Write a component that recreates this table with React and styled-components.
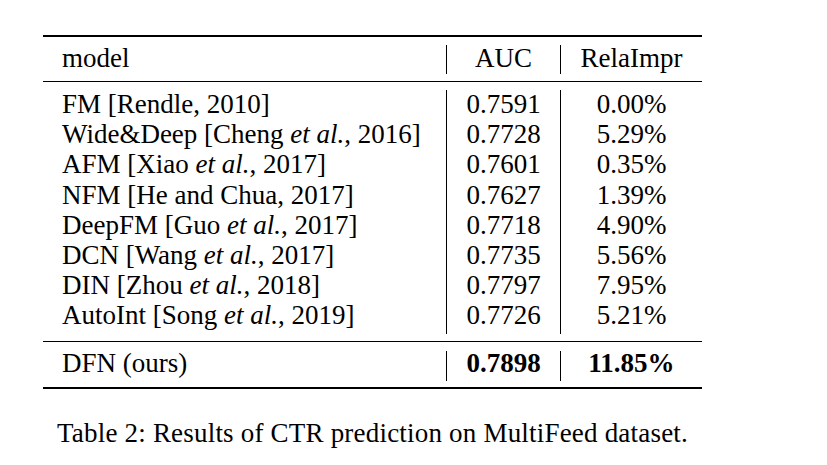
import React from 'react';
import styled, { createGlobalStyle } from 'styled-components';

// --- GLOBAL ---

const GlobalStyle = createGlobalStyle`
  html, body {
    margin: 0;
    padding: 0;
    background: #ffffff;
  }
  body {
    font-family: "Liberation Serif", "Times New Roman", serif;
    color: #000000;
  }
`;

// --- STYLED COMPONENTS ---

const Page = styled.div`
  padding: 35px 0 0 43px;
`;

const Figure = styled.figure`
  margin: 0;
  width: 659px;
  display: flex;
  flex-direction: column;
  align-items: center;
`;

const Table = styled.div`
  width: 100%;
  border-top: 2px solid #000;
  border-bottom: 2px solid #000;
  font-size: 27px;
`;

const Section = styled.div`
  display: flex;
  align-items: stretch;
  border-top: ${(p) => (p.$ruled ? '1px solid #000' : 'none')};
`;

const Column = styled.div`
  width: ${(p) => p.$width}px;
  flex: 0 0 auto;
  box-sizing: border-box;
  padding: ${(p) => p.$pad};
  padding-left: ${(p) => (p.$left ? '19px' : '0')};
  text-align: ${(p) => (p.$left ? 'left' : 'center')};
`;

const Line = styled.div`
  line-height: ${(p) => p.$lh || 30}px;
  height: ${(p) => p.$lh || 30}px;
  white-space: nowrap;
  font-weight: ${(p) => (p.$bold ? 700 : 400)};
`;

const Sep = styled.div`
  width: 1px;
  flex: 0 0 1px;
  background: #000;
  margin: ${(p) => p.$inset};
`;

const Em = styled.i`
  font-style: italic;
`;

const Caption = styled.figcaption`
  margin-top: 29px;
  font-size: 27px;
  line-height: 30px;
  letter-spacing: 0.2px;
  white-space: nowrap;
`;

// --- DATA ---

const rows = [
  { model: <>FM [Rendle, 2010]</>, auc: '0.7591', impr: '0.00%' },
  { model: <>Wide&amp;Deep [Cheng <Em>et al.</Em>, 2016]</>, auc: '0.7728', impr: '5.29%' },
  { model: <>AFM [Xiao <Em>et al.</Em>, 2017]</>, auc: '0.7601', impr: '0.35%' },
  { model: <>NFM [He and Chua, 2017]</>, auc: '0.7627', impr: '1.39%' },
  { model: <>DeepFM [Guo <Em>et al.</Em>, 2017]</>, auc: '0.7718', impr: '4.90%' },
  { model: <>DCN [Wang <Em>et al.</Em>, 2017]</>, auc: '0.7735', impr: '5.56%' },
  { model: <>DIN [Zhou <Em>et al.</Em>, 2018]</>, auc: '0.7797', impr: '7.95%' },
  { model: <>AutoInt [Song <Em>et al.</Em>, 2019]</>, auc: '0.7726', impr: '5.21%' },
];

const BODY_LH = 30.2;

// one block of the table between two rules
const Block = ({ ruled, pad, inset, lh, lines }) => (
  <Section $ruled={ruled}>
    <Column $width={403} $pad={pad} $left>
      {lines.map((l, i) => <Line key={i} $lh={lh}>{l.model}</Line>)}
    </Column>
    <Sep $inset={inset} />
    <Column $width={113} $pad={pad}>
      {lines.map((l, i) => <Line key={i} $lh={lh} $bold={l.bold}>{l.auc}</Line>)}
    </Column>
    <Sep $inset={inset} />
    <Column $width={141} $pad={pad}>
      {lines.map((l, i) => <Line key={i} $lh={lh} $bold={l.bold}>{l.impr}</Line>)}
    </Column>
  </Section>
);

const App = () => (
  <Page>
    <GlobalStyle />
    <Figure>
      <Table>
        <Block
          pad="6px 0 8px"
          inset="8px 0 7px"
          lines={[{ model: 'model', auc: 'AUC', impr: 'RelaImpr' }]}
        />
        <Block ruled pad="7px 0 10px" inset="8px 0 7px" lh={BODY_LH} lines={rows} />
        <Block
          ruled
          pad="6px 0 9px"
          inset="9px 0 6px"
          lines={[{ model: 'DFN (ours)', auc: '0.7898', impr: '11.85%', bold: true }]}
        />
      </Table>
      <Caption>Table 2: Results of CTR prediction on MultiFeed dataset.</Caption>
    </Figure>
  </Page>
);

export default App;
